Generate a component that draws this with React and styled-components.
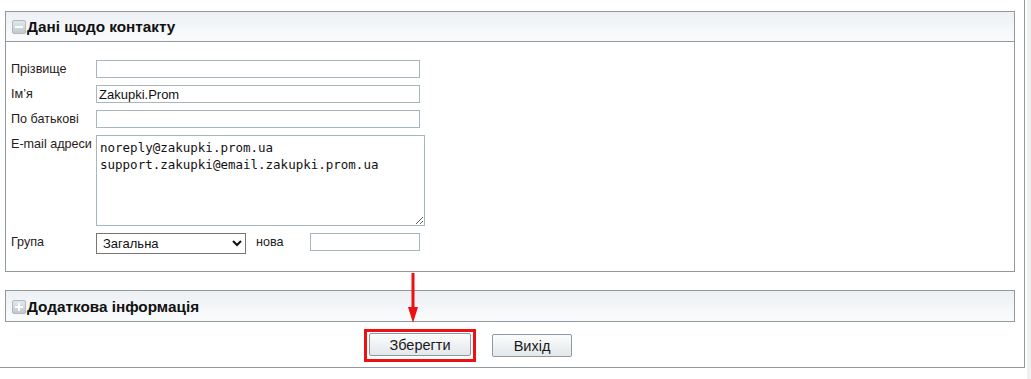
import { createGlobalStyle, styled } from "styled-components";

const GlobalStyle = createGlobalStyle`
  html, body {
    margin: 0;
    padding: 0;
    background: #ffffff;
  }
  body {
    font-family: Arial, "Liberation Sans", sans-serif;
    color: #222;
  }
`;

function ToggleIcon({ open }) {
  const id = open ? "tg-open" : "tg-closed";
  return (
    <svg width="14" height="14" viewBox="0 0 14 14">
      <defs>
        <linearGradient id={id} x1="0" y1="0" x2="0" y2="1">
          <stop offset="0" stopColor="#e4e9ec" />
          <stop offset="1" stopColor="#bfc8ce" />
        </linearGradient>
      </defs>
      <rect x="0.5" y="0.5" width="13" height="13" rx="1.5" fill={`url(#${id})`} stroke="#b0b9bf" />
      <rect x="3" y="6" width="8" height="2" fill="#ffffff" />
      {!open && <rect x="6" y="3" width="2" height="8" fill="#ffffff" />}
    </svg>
  );
}

export default function App() {
  return (
    <>
      <GlobalStyle />
      <SCScreen>
        <SCPage>
          <SCPanel>
            <SCPanelHeader>
              <ToggleIcon open />
              <span>Дані щодо контакту</span>
            </SCPanelHeader>
            <SCPanelBody>
              <SCForm>
                <SCLabel>Прізвище</SCLabel>
                <SCInput type="text" defaultValue="" />

                <SCLabel>Ім’я</SCLabel>
                <SCInput type="text" defaultValue="Zakupki.Prom" />

                <SCLabel>По батькові</SCLabel>
                <SCInput type="text" defaultValue="" />

                <SCLabel>E-mail адреси</SCLabel>
                <SCTextarea
                  defaultValue={"noreply@zakupki.prom.ua\nsupport.zakupki@email.zakupki.prom.ua"}
                />

                <SCLabel>Група</SCLabel>
                <SCGroupRow>
                  <SCSelect defaultValue="general">
                    <option value="general">Загальна</option>
                  </SCSelect>
                  <SCInlineLabel>нова</SCInlineLabel>
                  <SCInput type="text" $width={110} defaultValue="" />
                </SCGroupRow>
              </SCForm>
            </SCPanelBody>
          </SCPanel>

          <SCPanel $collapsed>
            <SCPanelHeader $collapsed>
              <ToggleIcon open={false} />
              <span>Додаткова інформація</span>
            </SCPanelHeader>
          </SCPanel>

          <SCActions>
            <SCHighlight>
              <SCButton $width={102}>Зберегти</SCButton>
            </SCHighlight>
            <SCButton $width={80}>Вихід</SCButton>
          </SCActions>

          <SCArrow>
            <svg width="12" height="50" viewBox="0 0 12 50">
              <rect x="4.5" y="0" width="3" height="36" fill="#ee1111" />
              <polygon points="1,34 11,34 6,50" fill="#ee1111" />
            </svg>
          </SCArrow>
        </SCPage>
        <SCScrollStrip />
      </SCScreen>
    </>
  );
}

const SCScreen = styled.div`
  display: flex;
  align-items: flex-start;
  width: 1031px;
  height: 379px;
  overflow: hidden;
`;

const SCPage = styled.div`
  position: relative;
  box-sizing: border-box;
  width: 1025px;
  padding: 11px 9px 5px 5px;
  border-right: 1px solid #8f999e;
  border-bottom: 1px solid #8f999e;
`;

const SCScrollStrip = styled.div`
  margin-left: 2px;
  flex: 1;
  height: 379px;
  background: #f0f0f0;
`;

const SCPanel = styled.section`
  border: 1px solid #8f999e;
  margin-top: ${(p) => (p.$collapsed ? "18px" : "0")};
`;

const SCPanelHeader = styled.div`
  display: flex;
  align-items: center;
  gap: 1px;
  height: 30px;
  padding-left: 6px;
  padding-top: 1px;
  box-sizing: border-box;
  background: linear-gradient(#edf1f4, #fafbfc);
  border-bottom: ${(p) => (p.$collapsed ? "none" : "1px solid #8f999e")};
  font-family: Arial, "Liberation Sans", sans-serif;
  font-size: 15.3px;
  font-weight: 700;
  color: #111;

  > svg {
    flex-shrink: 0;
  }
`;

const SCPanelBody = styled.div`
  padding: 18px 5px 17px 5px;
`;

const SCForm = styled.div`
  display: grid;
  grid-template-columns: 85px auto;
  row-gap: 7px;
  align-items: start;
`;

const SCLabel = styled.label`
  font-size: 12.6px;
  line-height: 14px;
  padding-top: 2px;
  color: #2a1a1a;
  white-space: nowrap;
`;

const SCInput = styled.input`
  box-sizing: border-box;
  width: ${(p) => p.$width || 324}px;
  height: 18px;
  margin: 0;
  padding: 0 2px;
  border: 1px solid #a8b6bd;
  font-family: Arial, "Liberation Sans", sans-serif;
  font-size: 13px;
  color: #111;
  outline: none;
`;

const SCTextarea = styled.textarea`
  box-sizing: border-box;
  width: 329px;
  height: 91px;
  margin: 0;
  padding: 3px 3px;
  border: 1px solid #a8b6bd;
  font-family: "DejaVu Sans Mono", "Liberation Mono", monospace;
  font-size: 12.5px;
  line-height: 17px;
  color: #111;
  resize: both;
  outline: none;
`;

const SCGroupRow = styled.div`
  display: flex;
  align-items: flex-start;
`;

const SCSelect = styled.select`
  box-sizing: border-box;
  width: 150px;
  height: 21px;
  margin: 0;
  padding: 0 2px;
  border: 1px solid #767676;
  border-radius: 0;
  background: #fff;
  font-family: Arial, "Liberation Sans", sans-serif;
  font-size: 13px;
  color: #111;
`;

const SCInlineLabel = styled.span`
  margin-left: 10px;
  width: 54px;
  font-size: 12.6px;
  line-height: 14px;
  padding-top: 2px;
  color: #222;
`;

const SCActions = styled.div`
  display: flex;
  align-items: center;
  gap: 16px;
  padding-left: 359px;
  margin-top: 7px;
`;

const SCHighlight = styled.div`
  display: flex;
  border: 3px solid #ee1111;
  padding: 1px 2px 3px 2px;
`;

const SCButton = styled.button`
  box-sizing: border-box;
  width: ${(p) => p.$width}px;
  height: 23px;
  margin: 0;
  padding: 0;
  border: 1px solid #8f999e;
  border-radius: 2px;
  background: linear-gradient(#fbfcfc, #e3e8eb);
  font-family: Arial, "Liberation Sans", sans-serif;
  font-size: 14.5px;
  color: #1a1a1a;
  cursor: pointer;
`;

const SCArrow = styled.div`
  position: absolute;
  left: 407px;
  top: 273px;
  line-height: 0;
`;
